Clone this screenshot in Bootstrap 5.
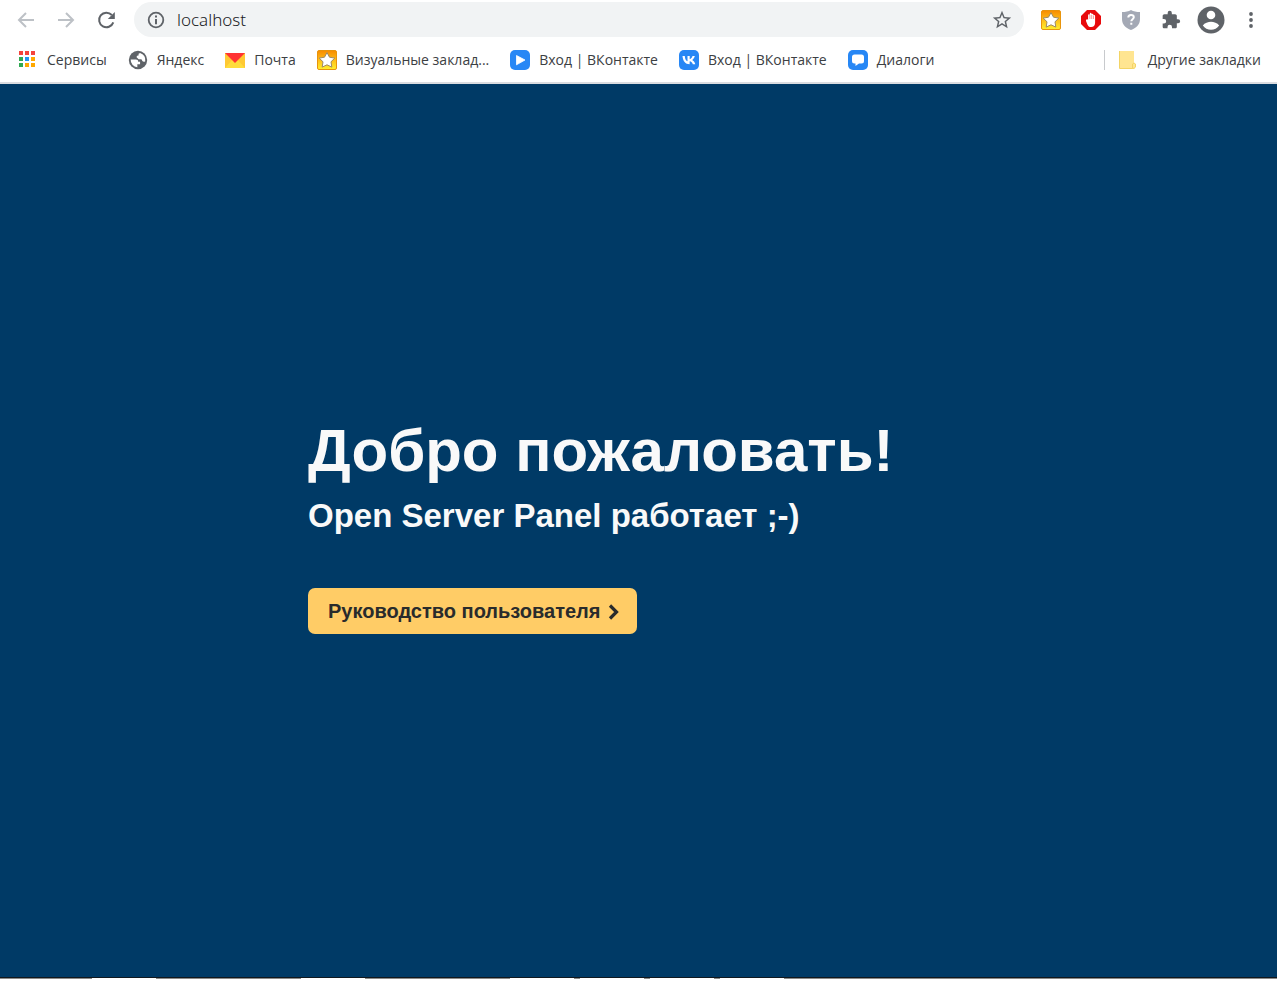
<!DOCTYPE html>
<html lang="ru">
<head>
<meta charset="utf-8">
<meta name="viewport" content="width=device-width, initial-scale=1">
<title>localhost</title>
<link href="https://cdn.jsdelivr.net/npm/bootstrap@5.3.0/dist/css/bootstrap.min.css" rel="stylesheet">
<style>
  body { font-family: "Open Sans", "Noto Sans", sans-serif; color: #3c4043; background: #fff; }
  svg { display: block; flex: none; }
  .toolbar { height: 39px; padding: 0 16px; }
  .tool { border: 0; padding: 0; background: none; color: #5f6368; width: 20px; display: flex; justify-content: center; flex: none; }
  .tool:disabled { color: #bdc1c6; }
  .nav-tools { gap: 20px; margin-right: 18px; }
  .ext-tools { gap: 20px; margin-left: 17px; }
  .omnibox { height: 35px; background: #f1f3f4; border-radius: 18px; padding: 0 12px; gap: 10px; }
  .address { border: 0; background: none; outline: 0; padding: 0 1px; min-width: 0; font: 300 17px/24px "Noto Sans", "Open Sans", sans-serif; color: #202124; }
  .bookmarks { height: 43px; padding: 0 16px 1px 18px; font-size: 14px; line-height: 20px; }
  .bookmarks a { color: #3c4043; text-decoration: none; gap: 9px; white-space: nowrap; }
  .marks { gap: 21px; }
  .other { border-left: 1px solid #c8cacd; padding-left: 14px; height: 20px; }
  .rule { height: 2px; background: #dadce0; }
  .welcome { background: #003a66; border-bottom: 1px solid #10181f; color: #f9f9f9; font-family: "Liberation Sans", Arial, sans-serif; padding-bottom: 11px; }
  .welcome-text { width: 100%; max-width: 661px; }
  .welcome h1 { font-size: 60px; line-height: 70px; font-weight: 700; margin: 0 0 10px; }
  .welcome h2 { font-size: 33px; line-height: 40px; font-weight: 700; margin: 0 0 52px; }
  .btn-guide { background: #fc6; color: #292b2c; font-size: 20px; line-height: 26px; font-weight: 700; padding: 10px 15px 10px 20px; border: 0; border-radius: 7px; gap: 6px; }
  .taskbar { height: 3px; }
  .task-edge { height: 1px; background: #8a8a88; padding-left: 92px; gap: 145px; overflow: hidden; }
  .task-edge span { width: 64px; flex: none; background: #fff; }
  .running { gap: 6px; }
</style>
</head>
<body class="d-flex flex-column min-vh-100">
<svg width="0" height="0" class="position-absolute" aria-hidden="true">
  <defs>
    <linearGradient id="gold" x1="0" y1="0" x2="0" y2="1"><stop offset="0" stop-color="#f78b00"/><stop offset=".55" stop-color="#ffc21a"/><stop offset="1" stop-color="#fff02c"/></linearGradient>
    <symbol id="star-tile" viewBox="0 0 20 20"><rect x=".5" y=".5" width="19" height="19" rx="1.5" fill="url(#gold)" stroke="#e8940c"/><path d="M10 2.600l2.500 4.600 5.300.9-3.800 3.700.8 5.300L10 14.800l-4.800 2.300.8-5.300-3.800-3.700 5.300-.9z" fill="#fff" stroke="#9d8a64" stroke-width="1" stroke-linejoin="round"/></symbol>
  </defs>
</svg>
<header>
  <div class="toolbar d-flex align-items-center">
    <div class="nav-tools d-flex align-items-center">
      <button class="tool" disabled aria-label="Назад"><svg width="20" height="20" viewBox="0 0 20 20" fill="none" stroke="currentColor" stroke-width="2"><path d="M18 10H3.500M10 3l-7 7 7 7"/></svg></button>
      <button class="tool" disabled aria-label="Вперёд"><svg width="20" height="20" viewBox="0 0 20 20" fill="none" stroke="currentColor" stroke-width="2"><path d="M2 10h14.500M10 3l7 7-7 7"/></svg></button>
      <button class="tool" aria-label="Обновить"><svg width="20" height="20" viewBox="0 0 20 20"><path d="M17.300 12.400A7.300 7.300 0 1 1 15.800 5" fill="none" stroke="currentColor" stroke-width="2"/><path d="M18.800 2v7h-7z" fill="currentColor"/></svg></button>
    </div>
    <div class="omnibox d-flex align-items-center flex-grow-1">
      <button class="tool" aria-label="Сведения о сайте"><svg width="18" height="18" viewBox="0 0 18 18"><circle cx="9" cy="9" r="7.300" fill="none" stroke="currentColor" stroke-width="1.800"/><path d="M8 4.600h2v2H8zm0 3.500h2v5.200H8z" fill="currentColor"/></svg></button>
      <input class="address flex-grow-1" type="text" value="localhost" aria-label="Адрес">
      <button class="tool" aria-label="Добавить в закладки"><svg width="22" height="22" viewBox="0 0 24 24" fill="currentColor"><path d="M22 9.240l-7.190-.62L12 2 9.190 8.630 2 9.240l5.460 4.730L5.820 21 12 17.270 18.180 21l-1.630-7.030L22 9.240zM12 15.400l-3.760 2.270 1-4.280-3.320-2.880 4.380-.38L12 6.100l1.710 4.040 4.380.38-3.320 2.880 1 4.280L12 15.400z"/></svg></button>
    </div>
    <div class="ext-tools d-flex align-items-center">
      <button class="tool" aria-label="Визуальные закладки"><svg width="20" height="20"><use href="#star-tile"/></svg></button>
      <button class="tool" aria-label="Блокировщик"><svg width="20" height="20" viewBox="0 0 20 20"><path d="M6 0h8l6 6v8l-6 6H6l-6-6V6z" fill="#e8090b"/><path d="M5.500 9.500c.6-.5 1.300-.2 1.600.3V5.200c0-1.300 1.600-1.300 1.700 0V3.700c0-1.200 1.700-1.200 1.800 0v.8c.1-1.200 1.700-1.100 1.800.1v1.200c.2-1.100 1.700-1 1.700.2v6.500c0 3-1.500 4.500-4 4.500-2 0-3-.9-3.700-2.600L5 11c-.2-.6 0-1.200.5-1.500z" fill="#fff"/><path d="M8.900 5v4m1.800-4v4m1.800-3v3" stroke="#e8090b" stroke-width=".4"/></svg></button>
      <button class="tool" aria-label="Защита"><svg width="18" height="20" viewBox="0 0 18 20"><path d="M9 0c2.500 1.500 5.500 2 9 2v7c0 6-4 9-9 11-5-2-9-5-9-11V2c3.500 0 6.500-.5 9-2z" fill="#a4a9b5"/><path d="M6.300 7.500C6.300 5.800 7.400 5 9 5s2.800.9 2.800 2.300c0 1.900-2.500 1.900-2.500 4M9.300 12.800v2" fill="none" stroke="#fff" stroke-width="2"/></svg></button>
      <button class="tool" aria-label="Расширения"><svg width="20" height="20" viewBox="0 0 24 24" fill="currentColor"><path d="M20.500 11H19V7c0-1.100-.9-2-2-2h-4V3.500a2.500 2.500 0 0 0-5 0V5H4c-1.100 0-2 .9-2 2v3.800h1.500a2.700 2.700 0 0 1 0 5.400H2V20c0 1.100.9 2 2 2h3.800v-1.500a2.700 2.700 0 0 1 5.400 0V22H17c1.100 0 2-.9 2-2v-4h1.500a2.500 2.500 0 0 0 0-5z"/></svg></button>
      <button class="tool" aria-label="Профиль"><svg width="28" height="28" viewBox="0 0 28 28"><circle cx="14" cy="14" r="13.500" fill="currentColor"/><circle cx="14" cy="9" r="4.300" fill="#fff"/><path d="M5.800 19.500c1.700-2.600 5.500-3.700 8.200-3.700s6.500 1.100 8.200 3.700a10 10 0 0 1-16.400 0z" fill="#fff"/></svg></button>
      <button class="tool" aria-label="Меню"><svg width="20" height="20" viewBox="0 0 20 20" fill="currentColor"><circle cx="10" cy="4" r="1.900"/><circle cx="10" cy="10" r="1.900"/><circle cx="10" cy="16" r="1.900"/></svg></button>
    </div>
  </div>
  <nav class="bookmarks d-flex align-items-center justify-content-between" aria-label="Закладки">
    <div class="marks d-flex">
      <a href="#" class="d-flex align-items-center"><svg width="20" height="20" viewBox="0 0 20 20"><path d="M1 1h4v4H1zm6 0h4v4H7zm6 0h4v4h-4z" fill="#f4433c"/><path d="M1 7h4v4H1zm0 6h4v4H1z" fill="#30a952"/><path d="M7 7h4v4H7z" fill="#2196f3"/><path d="M13 7h4v4h-4zm-6 6h4v4H7zm6 0h4v4h-4z" fill="#ffa800"/></svg>Сервисы</a>
      <a href="#" class="d-flex align-items-center"><svg width="20" height="20" viewBox="0 0 24 24"><circle cx="12" cy="12" r="11" fill="#5f6368"/><path d="M3.200 11.500h6.300c2 0 2.700 1 2.700 2.600h2.300v3h-3.300v3.600A8.800 8.800 0 0 1 3.200 11.500z" fill="#fff"/><path d="M14.500 3.500a8.800 8.800 0 0 1 6.200 10c-.8.8-2.400.9-3.200.1-.8-.7-.6-2.600-1.900-2.600h-2.800l-2.500-2.200c0-1.500.8-2.100 2.400-2.100V4.500z" fill="#fff"/></svg>Яндекс</a>
      <a href="#" class="d-flex align-items-center"><svg width="20" height="20" viewBox="0 0 20 20"><path d="M0 3h20v15H0z" fill="#ffc933"/><path d="M0 18L8 9h4l8 9z" fill="#ffdc3c"/><path d="M0 3h20L10 13z" fill="#f33"/></svg>Почта</a>
      <a href="#" class="d-flex align-items-center"><svg width="20" height="20"><use href="#star-tile"/></svg>Визуальные заклад...</a>
      <a href="#" class="d-flex align-items-center"><svg width="20" height="20" viewBox="0 0 20 20"><rect width="20" height="20" rx="5" fill="#2787f5"/><path d="M6.500 5.500L15 10l-8.500 4.800z" fill="#fff" stroke="#fff" stroke-linejoin="round" stroke-width=".8"/></svg>Вход | ВКонтакте</a>
      <a href="#" class="d-flex align-items-center"><svg width="20" height="20" viewBox="0 0 20 20"><rect width="20" height="20" rx="5" fill="#2787f5"/><path d="M10.600 14.200C6.300 14.200 4 11.400 3.500 6h2.300c.2 3.300 1.400 4.800 2.700 5.200V6h2.200v3.200c1.300-.2 2.300-1.600 2.800-3.200h2.300c-.4 1.700-1.400 3.100-2.600 3.900 1.400.7 2.500 2.100 3.100 4.300h-2.500c-.5-1.500-1.600-2.600-3.100-2.900z" fill="#fff"/></svg>Вход | ВКонтакте</a>
      <a href="#" class="d-flex align-items-center"><svg width="20" height="20" viewBox="0 0 20 20"><rect width="20" height="20" rx="5" fill="#2787f5"/><path d="M6.500 4.500h7a2.500 2.500 0 0 1 2.500 2.500v4a2.500 2.500 0 0 1-2.500 2.500H11L7.500 16v-2.500h-1A2.500 2.500 0 0 1 4 11V7a2.500 2.500 0 0 1 2.500-2.500z" fill="#fff"/></svg>Диалоги</a>
    </div>
    <a href="#" class="other d-flex align-items-center"><svg width="20" height="20" viewBox="0 0 20 20"><path d="M1 1h14v12l1.500 1v3.500L15 19H1z" fill="#ffe591"/><path d="M.5 1v17.500h13M13.500 18.500v-4.500q1.500-2 3 0v3q-1 1.500-3 1.500" fill="none" stroke="#f3d465"/></svg>Другие закладки</a>
  </nav>
  <div class="rule"></div>
</header>
<main class="welcome flex-grow-1 d-flex flex-column align-items-center justify-content-center">
  <div class="welcome-text">
    <h1>Добро пожаловать!</h1>
    <h2>Open Server Panel работает ;-)</h2>
    <a href="#" class="btn btn-guide d-inline-flex align-items-center">Руководство пользователя<svg width="16" height="18" viewBox="0 0 16 18"><path d="M4 3.500l6.500 6.500L4 16.500" fill="none" stroke="currentColor" stroke-width="3.200"/></svg></a>
  </div>
</main>
<div class="taskbar" aria-hidden="true">
  <div class="task-edge d-flex">
    <span></span><span></span>
    <div class="running d-flex"><span></span><span></span><span></span><span></span></div>
  </div>
</div>
<script src="https://cdn.jsdelivr.net/npm/bootstrap@5.3.0/dist/js/bootstrap.bundle.min.js"></script>
</body>
</html>
